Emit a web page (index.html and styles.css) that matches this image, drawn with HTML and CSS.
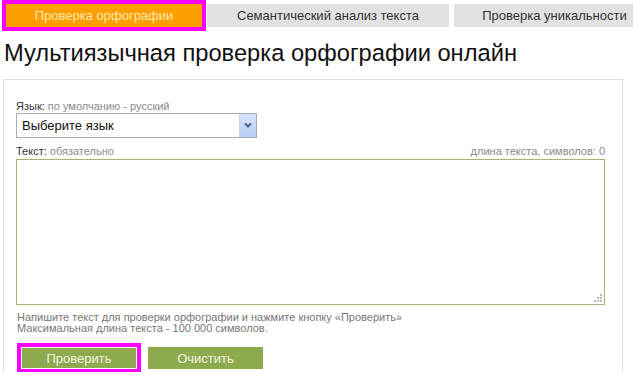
FILE: index.html
```html
<!DOCTYPE html>
<html lang="ru">
<head>
  <meta charset="UTF-8" />
  <title>Мультиязычная проверка орфографии онлайн</title>
  <link rel="stylesheet" href="styles.css">
</head>
<body>
  <div class="tabs">
    <a class="tab tab-active" href="#">Проверка орфографии</a>
    <a class="tab tab-semantic" href="#">Семантический анализ текста</a>
    <a class="tab tab-unique" href="#">Проверка уникальности</a>
  </div>

  <h1>Мультиязычная проверка орфографии онлайн</h1>

  <div class="panel">
    <div class="field-label"><b>Язык:</b> по умолчанию - русский</div>
    <div class="select-wrap">
      <select id="language">
        <option>Выберите язык</option>
        <option>Русский</option>
        <option>English</option>
        <option>Deutsch</option>
        <option>Français</option>
      </select>
      <span class="select-btn">
        <svg viewBox="0 0 16 22" width="16" height="22">
          <path d="M5 9.5l3 3 3-3" fill="none" stroke="#4d6185" stroke-width="2"/>
        </svg>
      </span>
    </div>

    <div class="text-head">
      <div class="field-label"><b>Текст:</b> обязательно</div>
      <div class="counter">длина текста, символов: <span id="count">0</span></div>
    </div>
    <div class="text-wrap">
      <textarea id="text"></textarea>
      <span class="grip">
        <svg viewBox="0 0 9 9" width="9" height="9" fill="#b8b8b8">
          <rect x="6" y="0" width="2" height="2"/>
          <rect x="3" y="3" width="2" height="2"/>
          <rect x="6" y="3" width="2" height="2"/>
          <rect x="0" y="6" width="2" height="2"/>
          <rect x="3" y="6" width="2" height="2"/>
          <rect x="6" y="6" width="2" height="2"/>
        </svg>
      </span>
    </div>

    <p class="hint">Напишите текст для проверки орфографии и нажмите кнопку «Проверить»<br>Максимальная длина текста - 100 000 символов.</p>

    <div class="actions">
      <button class="btn btn-check" id="check-btn">Проверить</button>
      <button class="btn" id="clear-btn">Очистить</button>
    </div>
  </div>

  <script>
    // keep the counter in sync with the textarea
    var text = document.getElementById('text');
    text.addEventListener('input', function () {
      document.getElementById('count').textContent = text.value.length;
    });

    document.getElementById('clear-btn').addEventListener('click', function () {
      text.value = '';
      document.getElementById('count').textContent = 0;
    });
  </script>
</body>
</html>
```

FILE: styles.css
```css
body {
  margin: 0;
  font-family: 'Liberation Sans', Arial, sans-serif;
  color: #333;
  background: #fff;
  overflow: hidden;
}

.tabs {
  display: flex;
  gap: 5px;
  padding: 4px 0 0 6px;
  white-space: nowrap;
}

.tab {
  flex: none;
  height: 23px;
  line-height: 23px;
  text-align: center;
  font-size: 13px;
  color: #333;
  background: #e1e1e1;
  text-decoration: none;
}

.tab-active {
  width: 196px;
  background: #ff9e00;
  color: #ffe9ac;
  outline: 4px solid #ff00ff;
}

.tab-semantic {
  width: 242px;
}

.tab-unique {
  width: 201px;
}

h1 {
  margin: 11px 0 0 4px;
  font-size: 23.7px;
  font-weight: normal;
  color: #111;
  line-height: 30px;
}

.panel {
  margin: 11px 0 0 3px;
  width: 620px;
  height: 293px;
  box-sizing: border-box;
  border: 1px solid #ddd;
  border-bottom: none;
  padding: 20px 17px 0 12px;
}

.field-label {
  font-size: 11px;
  line-height: 13px;
  color: #8a8a8a;
}

.field-label b {
  font-weight: normal;
  color: #333;
}

.select-wrap {
  position: relative;
  width: 241px;
}

select {
  display: block;
  width: 100%;
  height: 25px;
  padding: 0 0 0 5px;
  border: 1px solid #a5acb5;
  background: #fff;
  font-family: 'Liberation Sans', Arial, sans-serif;
  font-size: 13px;
  color: #111;
  appearance: none;
  -webkit-appearance: none;
  border-radius: 0;
}

.select-btn {
  position: absolute;
  right: 1px;
  top: 1px;
  width: 16px;
  height: 23px;
  background: linear-gradient(#d6e2fb, #b9cdf5);
  border-left: 1px solid #c3d3f3;
  pointer-events: none;
}

.select-btn svg {
  display: block;
}

.text-head {
  display: flex;
  justify-content: space-between;
  margin-top: 7px;
}

.counter {
  font-size: 11px;
  line-height: 13px;
  color: #8a8a8a;
}

.text-wrap {
  position: relative;
  margin-top: 1px;
}

textarea {
  display: block;
  width: 100%;
  height: 146px;
  box-sizing: border-box;
  border: 1px solid #9fb872;
  resize: none;
  font-family: 'Liberation Sans', Arial, sans-serif;
  font-size: 13px;
  padding: 4px;
}

textarea:focus {
  outline: none;
}

.grip {
  position: absolute;
  right: 2px;
  bottom: 2px;
  line-height: 0;
}

.hint {
  margin: 7px 0 0 1px;
  font-size: 11px;
  line-height: 11px;
  color: #777;
}

.actions {
  display: flex;
  gap: 12px;
  margin-top: 14px;
  padding-left: 6px;
}

.btn {
  width: 114px;
  height: 20px;
  border: none;
  padding: 0;
  background: #8daa4f;
  color: #f1f5e4;
  font-family: 'Liberation Sans', Arial, sans-serif;
  font-size: 13px;
  cursor: pointer;
}

.btn-check {
  outline: 4px solid #ff00ff;
  outline-offset: 1px;
}

#clear-btn {
  width: 115px;
  height: 22px;
  margin-top: -1px;
}
```
